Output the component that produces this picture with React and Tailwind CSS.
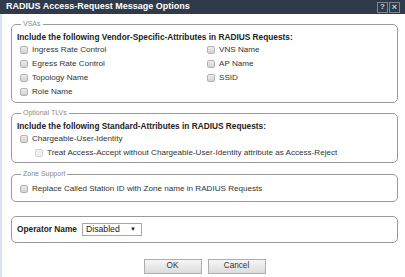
import React from "react";

function Check({ label, disabled }) {
  return (
    <label className="flex h-[14px] items-center gap-[4px] text-[8.1px] text-[#333]">
      <span
        className={`inline-block h-[8px] w-[8px] shrink-0 rounded-[2px] border ${
          disabled
            ? "border-[#d4d4d4] bg-[#f1f1f1]"
            : "border-[#b3b3b3] bg-gradient-to-b from-[#ececec] to-[#d2d2d2]"
        }`}
      />
      <span>{label}</span>
    </label>
  );
}

function Group({ title, className = "", children }) {
  return (
    <fieldset
      className={`rounded-[5px] border border-[#9a9a9a] px-[5px] ${className}`}
    >
      {title && (
        <legend className="ml-[4px] px-[2px] text-[7px] leading-[10px] text-[#8a8a8a]">
          {title}
        </legend>
      )}
      {children}
    </fieldset>
  );
}

export default function App() {
  return (
    <div
      className="flex h-[277px] w-[405px] flex-col overflow-hidden bg-white"
      style={{ fontFamily: '"Liberation Sans", Arial, sans-serif' }}
    >
      {/* title bar */}
      <div className="flex h-[14px] shrink-0 items-center justify-between bg-[#2f3b4b] pl-[6px] pr-[5px]">
        <span className="text-[9px] font-bold text-white">
          RADIUS Access-Request Message Options
        </span>
        <div className="flex gap-[1px]">
          <span className="flex h-[11px] w-[11px] items-center justify-center border border-[#7d8794] text-[8px] font-bold leading-none text-[#c9ced5]">
            ?
          </span>
          <span className="flex h-[11px] w-[11px] items-center justify-center border border-[#7d8794] text-[9px] font-bold leading-none text-[#c9ced5]">
            ×
          </span>
        </div>
      </div>

      <div className="flex flex-1 flex-col border-l-[2px] border-[#d6e4f2] pl-[9px] pr-[7px] pt-[5px]">
        <Group title="VSAs" className="pb-[3px]">
          <div className="pt-[2px] text-[8.3px] font-bold leading-[12px] text-[#222]">
            Include the following Vendor-Specific-Attributes in RADIUS Requests:
          </div>
          <div className="grid grid-cols-[187px_1fr] pl-[3px]">
            <Check label="Ingress Rate Control" />
            <Check label="VNS Name" />
            <Check label="Egress Rate Control" />
            <Check label="AP Name" />
            <Check label="Topology Name" />
            <Check label="SSID" />
            <Check label="Role Name" />
          </div>
        </Group>

        <Group title="Optional TLVs" className="mt-[5px] pb-[2px]">
          <div className="pt-[2px] text-[8.3px] font-bold leading-[12px] text-[#222]">
            Include the following Standard-Attributes in RADIUS Requests:
          </div>
          <div className="pl-[3px]">
            <Check label="Chargeable-User-Identity" />
            <div className="pl-[15px]">
              <Check
                disabled
                label="Treat Access-Accept without Chargeable-User-Identity attribute as Access-Reject"
              />
            </div>
          </div>
        </Group>

        <Group title="Zone Support" className="mt-[6px] pb-[5px]">
          <div className="pl-[3px] pt-[3px]">
            <Check label="Replace Called Station ID with Zone name in RADIUS Requests" />
          </div>
        </Group>

        <Group className="mt-[14px] py-[6px]">
          <div className="flex items-center gap-[5px]">
            <span className="text-[8.3px] font-bold text-[#222]">Operator Name</span>
            <div className="flex h-[13px] w-[60px] items-center justify-between border border-[#a8a8a8] bg-white pl-[3px] pr-[5px]">
              <span className="text-[8.7px] text-[#222]">Disabled</span>
              <span className="text-[6px] text-[#222]">▼</span>
            </div>
          </div>
        </Group>

        <div className="mt-[16px] flex justify-center gap-[6px]">
          <button className="h-[15px] w-[58px] border border-[#adadad] bg-gradient-to-b from-[#f6f6f6] to-[#dcdcdc] text-[8.2px] text-[#333]">
            OK
          </button>
          <button className="h-[15px] w-[58px] border border-[#adadad] bg-gradient-to-b from-[#f6f6f6] to-[#dcdcdc] text-[8.2px] text-[#333]">
            Cancel
          </button>
        </div>
      </div>
    </div>
  );
}
